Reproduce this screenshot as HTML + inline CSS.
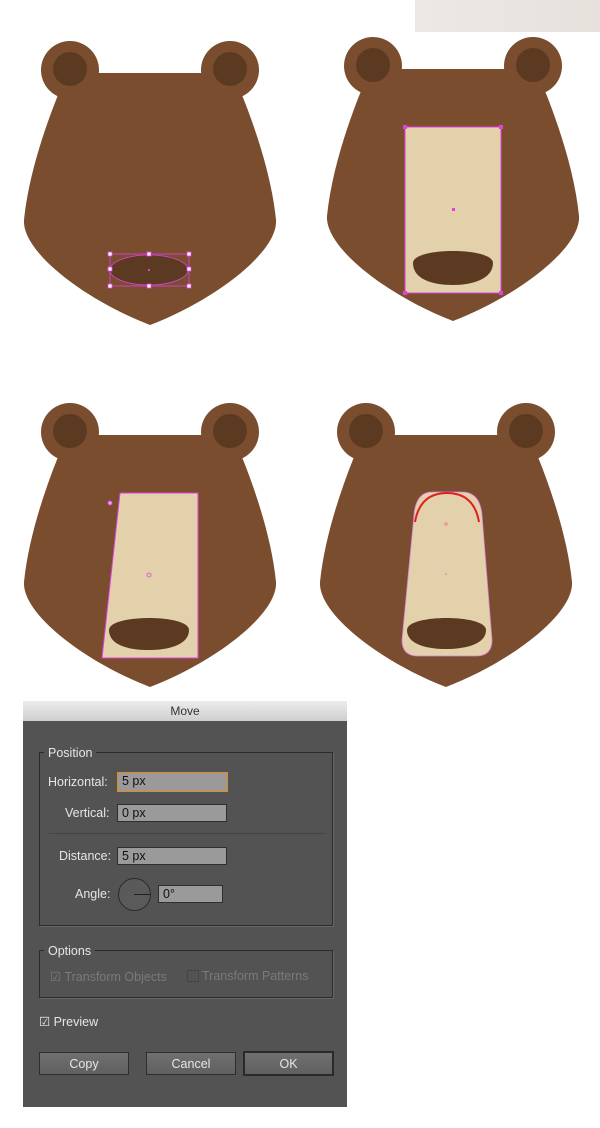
<!DOCTYPE html>
<html><head><style>
body{margin:0;width:600px;height:1128px;background:#fff;position:relative;overflow:hidden;font-family:"Liberation Sans",sans-serif}
.dlg{position:absolute;left:23px;top:701px;width:324px;height:406px;background:#535353}
.tb{height:20px;background:linear-gradient(#ececec,#cfcfcf);color:#333;font-size:12px;text-align:center;line-height:21px}
.t{position:absolute;color:#e6e6e6;font-size:12.5px}
.in{position:absolute;background:#9a9a9a;border:1px solid #2e2e2e;height:18px;color:#111;font-size:12.5px;line-height:17px;padding-left:4px;box-sizing:border-box}
.box{position:absolute;border:1px solid #2c2c2c;box-shadow:1px 1px 0 #666}
.btn{position:absolute;height:23px;background:linear-gradient(#707070,#606060);border:1px solid #2e2e2e;color:#e6e6e6;font-size:12.5px;text-align:center;line-height:23px;box-sizing:border-box}
</style></head><body>
<div style="position:absolute;left:415px;top:0;width:185px;height:32px;background:linear-gradient(90deg,#ece8e4,#e6e1dc)"></div>
<svg width="600" height="700" style="position:absolute;left:0;top:0">
<defs>
<g id="bear">
<path d="M58,95 L100,73 H200 L242,95 C258,135 272,180 276,220 C278,252 215,300 150,325 C85,300 22,252 24,220 C28,180 42,135 58,95Z" fill="#7a4d2f"/>
<circle cx="70" cy="70" r="29" fill="#7a4d2f"/><circle cx="70" cy="69" r="17" fill="#5c3921"/>
<circle cx="230" cy="70" r="29" fill="#7a4d2f"/><circle cx="230" cy="69" r="17" fill="#5c3921"/>
<rect x="98" y="73" width="104" height="30" fill="#7a4d2f"/>
</g>
</defs>
<use href="#bear"/>
<ellipse cx="149" cy="270" rx="39" ry="15" fill="#5c3921" stroke="#e040e0" stroke-width="0.8"/>
<rect x="110" y="254" width="79" height="32" fill="none" stroke="#e040e0" stroke-width="0.8"/>
<g fill="#fff" stroke="#e040e0" stroke-width="0.8"><rect x="108" y="252" width="4" height="4"/><rect x="147" y="252" width="4" height="4"/><rect x="187" y="252" width="4" height="4"/><rect x="108" y="284" width="4" height="4"/><rect x="147" y="284" width="4" height="4"/><rect x="187" y="284" width="4" height="4"/><rect x="108" y="267" width="4" height="4"/><rect x="187" y="267" width="4" height="4"/></g>
<rect x="148" y="269" width="2" height="2" fill="#e040e0"/>

<use href="#bear" transform="translate(303,-4)"/>
<rect x="405" y="127" width="96" height="166" fill="#e2d1aa" stroke="#e040e0" stroke-width="1"/>
<path d="M413,263 C413,247 493,247 493,263 C493,279 472,285 453,285 C432,285 413,279 413,263Z" fill="#5c3921"/>
<rect x="452" y="208" width="3" height="3" fill="#e040e0"/>
<g fill="#e040e0"><rect x="403" y="125" width="4" height="4"/><rect x="499" y="125" width="4" height="4"/><rect x="403" y="291" width="4" height="4"/><rect x="499" y="291" width="4" height="4"/></g>

<use href="#bear" transform="translate(0,362)"/>
<path d="M120,493 L198,493 L198,658 L102,658Z" fill="#e2d1aa" stroke="#e040e0" stroke-width="1"/>
<path d="M109,630 C109,614 189,614 189,630 C189,645 168,650 149,650 C128,650 109,645 109,630Z" fill="#5c3921"/>
<circle cx="110" cy="503" r="2" fill="#f0a0f0" stroke="#e040e0" stroke-width="0.8"/>
<circle cx="149" cy="575" r="2" fill="none" stroke="#e040e0" stroke-width="0.8"/>

<use href="#bear" transform="translate(296,362)"/>
<path d="M432,492 H462 Q480,492 482,515 L492,640 Q492,656 476,656 H418 Q402,656 402,640 L414,515 Q416,492 432,492Z" fill="#e2d1aa" stroke="#e080e0" stroke-width="0.8"/>
<path d="M415,522 Q420,493 447,493 Q474,493 479,522" fill="none" stroke="#e02020" stroke-width="2"/>
<path d="M407,630 C407,614 486,614 486,630 C486,644 466,649 446,649 C426,649 407,644 407,630Z" fill="#5c3921"/>
<circle cx="446" cy="524" r="2" fill="#e8a0a0"/>
<circle cx="446" cy="574" r="1" fill="#e090c0"/>
</svg>

<div class="dlg">
<div class="tb">Move</div>
<div class="box" style="left:16px;top:51px;width:292px;height:172px"></div>
<div class="t" style="left:21px;top:45px;background:#535353;padding:0 4px">Position</div>
<div class="t" style="left:25px;top:74px">Horizontal:</div>
<div class="in" style="left:94px;top:71px;width:111px;height:20px;border:1px solid #e08a20">5 px</div>
<div class="t" style="left:42px;top:105px">Vertical:</div>
<div class="in" style="left:94px;top:103px;width:110px">0 px</div>
<div style="position:absolute;left:26px;top:132px;width:276px;height:1px;background:#444"></div>
<div class="t" style="left:36px;top:148px">Distance:</div>
<div class="in" style="left:94px;top:146px;width:110px">5 px</div>
<div class="t" style="left:52px;top:186px">Angle:</div>
<div style="position:absolute;left:95px;top:177px;width:33px;height:33px;border-radius:50%;background:#5a5a5a;border:1px solid #2a2a2a;box-sizing:border-box"></div>
<div style="position:absolute;left:111px;top:193px;width:16px;height:1px;background:#222"></div>
<div class="in" style="left:135px;top:184px;width:65px">0°</div>
<div class="box" style="left:16px;top:249px;width:292px;height:46px"></div>
<div class="t" style="left:21px;top:243px;background:#535353;padding:0 4px">Options</div>
<div class="t" style="left:27px;top:268px;color:#7a7a7a">☑ Transform Objects</div>
<div style="position:absolute;left:164px;top:269px;width:10px;height:10px;border:1px solid #444"></div>
<div class="t" style="left:179px;top:268px;color:#7a7a7a">Transform Patterns</div>
<div class="t" style="left:16px;top:313px">☑ Preview</div>
<div class="btn" style="left:16px;top:351px;width:90px">Copy</div>
<div class="btn" style="left:123px;top:351px;width:90px">Cancel</div>
<div class="btn" style="left:220px;top:350px;width:91px;height:25px;border:2px solid #2a2a2a">OK</div>
</div>
</body></html>
